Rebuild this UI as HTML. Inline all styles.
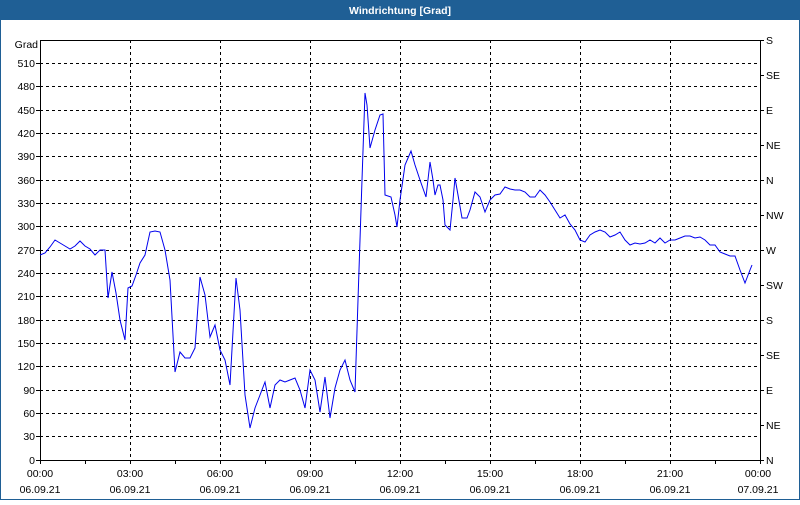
<!DOCTYPE html>
<html><head><style>
html,body{margin:0;padding:0;background:#fff;}
body{width:800px;height:500px;overflow:hidden;position:relative;font-family:"Liberation Sans",Tahoma,sans-serif;}
</style></head><body>
<svg width="800" height="500" xmlns="http://www.w3.org/2000/svg" font-family="Liberation Sans, sans-serif" font-size="10.5">
<rect x="0" y="0" width="800" height="500" fill="#fff"/>
<rect x="0.5" y="0.5" width="799" height="499" fill="none" stroke="#1f5f95"/>
<rect x="0" y="0" width="800" height="20" fill="#1f5f95"/>
<text x="400" y="14" fill="#fff" font-weight="bold" text-anchor="middle">Windrichtung [Grad]</text>
<g stroke="#000" stroke-dasharray="3,3" stroke-width="1">
<line x1="40" x2="760" y1="436.5" y2="436.5"/><line x1="40" x2="760" y1="413.5" y2="413.5"/>
<line x1="40" x2="760" y1="390.5" y2="390.5"/><line x1="40" x2="760" y1="366.5" y2="366.5"/>
<line x1="40" x2="760" y1="343.5" y2="343.5"/><line x1="40" x2="760" y1="320.5" y2="320.5"/>
<line x1="40" x2="760" y1="296.5" y2="296.5"/><line x1="40" x2="760" y1="273.5" y2="273.5"/>
<line x1="40" x2="760" y1="250.5" y2="250.5"/><line x1="40" x2="760" y1="226.5" y2="226.5"/>
<line x1="40" x2="760" y1="203.5" y2="203.5"/><line x1="40" x2="760" y1="180.5" y2="180.5"/>
<line x1="40" x2="760" y1="156.5" y2="156.5"/><line x1="40" x2="760" y1="133.5" y2="133.5"/>
<line x1="40" x2="760" y1="110.5" y2="110.5"/><line x1="40" x2="760" y1="86.5" y2="86.5"/>
<line x1="40" x2="760" y1="63.5" y2="63.5"/>
<line y1="40" y2="460" x1="130.5" x2="130.5"/><line y1="40" y2="460" x1="220.5" x2="220.5"/>
<line y1="40" y2="460" x1="310.5" x2="310.5"/><line y1="40" y2="460" x1="400.5" x2="400.5"/>
<line y1="40" y2="460" x1="490.5" x2="490.5"/><line y1="40" y2="460" x1="580.5" x2="580.5"/>
<line y1="40" y2="460" x1="670.5" x2="670.5"/>
</g>
<rect x="40.5" y="40.5" width="720" height="420" fill="none" stroke="#000"/>
<g stroke="#000">
<path d="M85.5 460v4M130.5 460v4M175.5 460v4M220.5 460v4M265.5 460v4M310.5 460v4M355.5 460v4M400.5 460v4M445.5 460v4M490.5 460v4M535.5 460v4M580.5 460v4M625.5 460v4M670.5 460v4M715.5 460v4M40.5 460v4M760.5 460v4"/>
<path d="M760 40.5h4M760 75.5h4M760 110.5h4M760 145.5h4M760 180.5h4M760 215.5h4M760 250.5h4M760 285.5h4M760 320.5h4M760 355.5h4M760 390.5h4M760 425.5h4M760 460.5h4"/>
<path d="M36 63.5h4M36 86.5h4M36 110.5h4M36 133.5h4M36 156.5h4M36 180.5h4M36 203.5h4M36 226.5h4M36 250.5h4M36 273.5h4M36 296.5h4M36 320.5h4M36 343.5h4M36 366.5h4M36 390.5h4M36 413.5h4M36 436.5h4M36 460.5h4"/>
</g>
<g text-anchor="end" fill="#000">
<text x="38" y="48">Grad</text>
<text x="35" y="67">510</text><text x="35" y="90">480</text><text x="35" y="114">450</text>
<text x="35" y="137">420</text><text x="35" y="160">390</text><text x="35" y="184">360</text>
<text x="35" y="207">330</text><text x="35" y="230">300</text><text x="35" y="254">270</text>
<text x="35" y="277">240</text><text x="35" y="300">210</text><text x="35" y="324">180</text>
<text x="35" y="347">150</text><text x="35" y="370">120</text><text x="35" y="394">90</text>
<text x="35" y="417">60</text><text x="35" y="440">30</text><text x="35" y="464">0</text>
</g>
<g fill="#000">
<text x="766" y="44">S</text><text x="766" y="79">SE</text><text x="766" y="114">E</text>
<text x="766" y="149">NE</text><text x="766" y="184">N</text><text x="766" y="219">NW</text>
<text x="766" y="254">W</text><text x="766" y="289">SW</text><text x="766" y="324">S</text>
<text x="766" y="359">SE</text><text x="766" y="394">E</text><text x="766" y="429">NE</text>
<text x="766" y="464">N</text>
</g>
<g text-anchor="middle" fill="#000">
<text x="40" y="477">00:00</text><text x="40" y="493">06.09.21</text>
<text x="130" y="477">03:00</text><text x="130" y="493">06.09.21</text>
<text x="220" y="477">06:00</text><text x="220" y="493">06.09.21</text>
<text x="310" y="477">09:00</text><text x="310" y="493">06.09.21</text>
<text x="400" y="477">12:00</text><text x="400" y="493">06.09.21</text>
<text x="490" y="477">15:00</text><text x="490" y="493">06.09.21</text>
<text x="580" y="477">18:00</text><text x="580" y="493">06.09.21</text>
<text x="670" y="477">21:00</text><text x="670" y="493">06.09.21</text>
<text x="758" y="477">00:00</text><text x="758" y="493">07.09.21</text>
</g>
<polyline fill="none" stroke="#0000ee" stroke-width="1" points="40,255 45,253 50,247 55,240 60,243 65,246 70,249 75,246 80,241 85,246 90,249 95,255 100,250 105,250 108,298 112,272 116,293 120,320 125,340 128,288 132,286 136,275 140,263 145,255 150,232 155,231 160,232 165,250 170,280 175,372 180,352 185,358 190,358 195,348 200,277 205,295 210,337 215,325 220,350 225,360 230,385 236,278 240,310 245,395 250,428 255,408 260,395 265,382 270,408 275,385 280,380 285,382 290,380 295,378 300,390 305,408 310,370 315,380 320,412 325,377 330,418 335,388 340,370 345,360 350,380 355,392 358,300 362,180 365,93 367,105 370,148 375,130 380,115 383,114 385,195 391,197 395,215 397,227 400,200 405,165 411,151 415,165 420,180 426,197 430,162 433,180 435,195 438,185 440,185 443,200 445,225 450,230 453,200 455,178 458,195 462,218 467,218 470,210 475,192 480,197 485,212 490,200 495,195 500,194 505,187 510,189 515,190 520,190 525,192 530,197 535,197 540,190 545,195 550,202 555,210 560,218 565,215 570,224 575,230 580,240 585,242 590,235 595,232 600,230 605,232 610,237 615,235 620,232 625,240 630,245 635,243 640,244 645,243 650,240 655,243 660,238 665,243 670,240 675,240 680,238 685,236 690,236 695,238 700,237 705,240 710,245 715,245 720,252 725,254 730,256 735,256 740,270 745,283 750,270 752,265"/>
</svg>
</body></html>
